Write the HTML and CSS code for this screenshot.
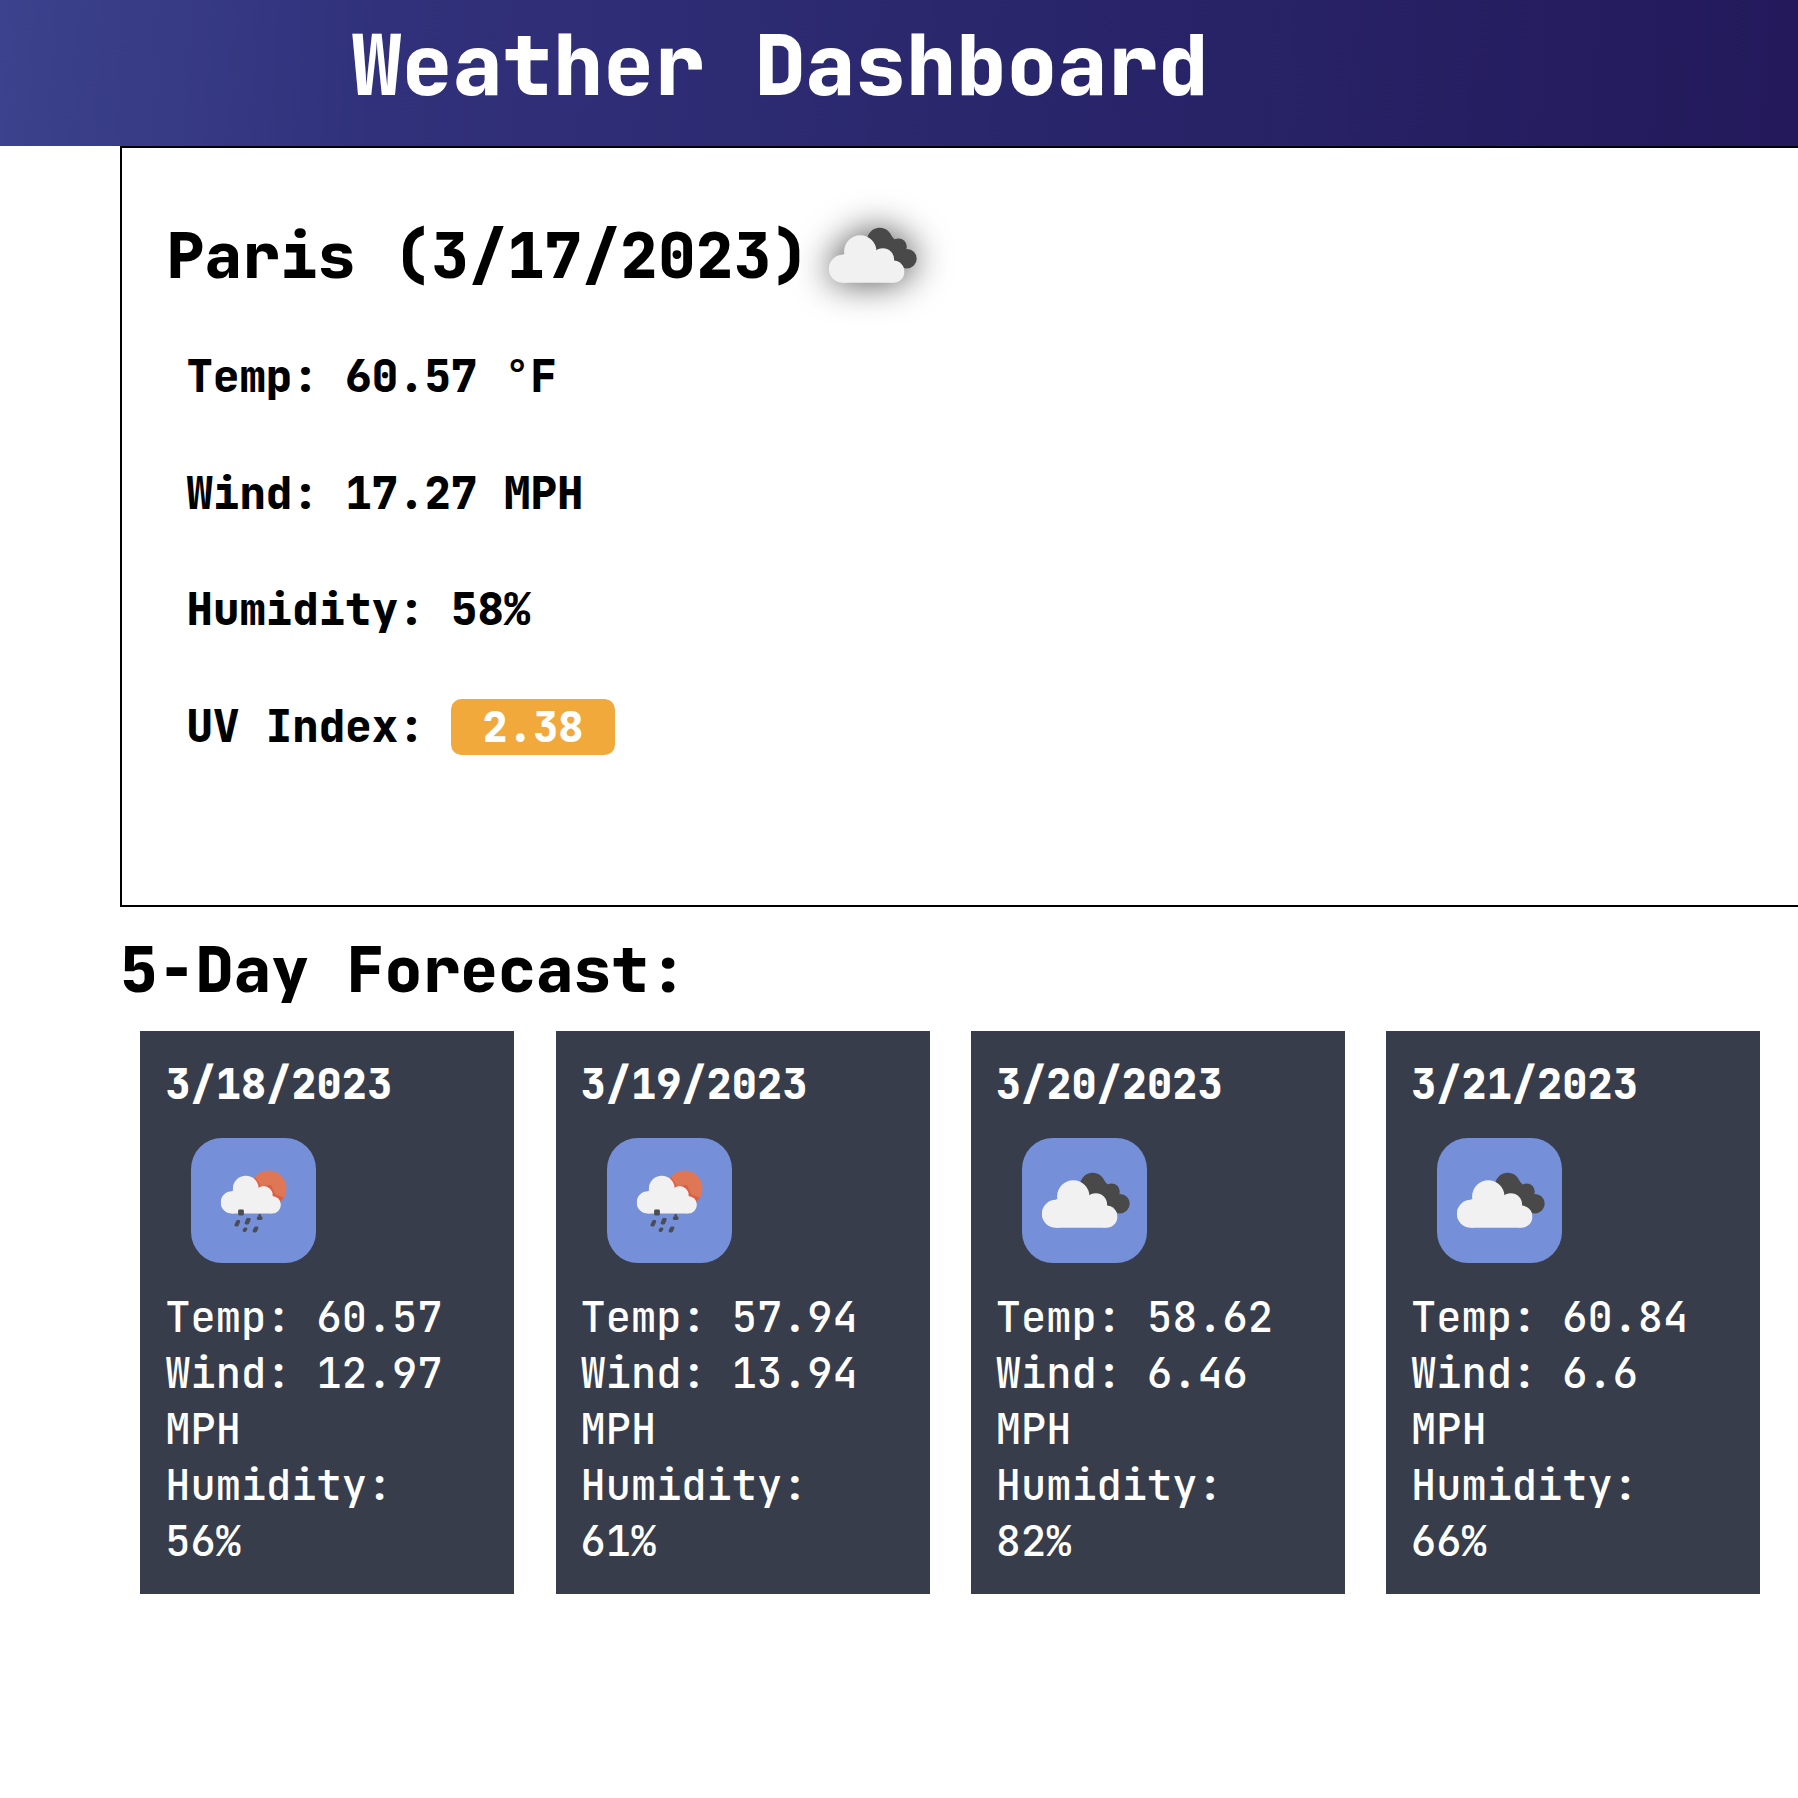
FILE: index.html
```html
<!DOCTYPE html>
<html lang="en">
<head>
<meta charset="utf-8">
<title>Weather Dashboard</title>
<link rel="stylesheet" href="styles.css">
</head>
<body>
<svg class="sprite" aria-hidden="true">
  <symbol id="cloud" viewBox="0 0 76 50">
    <g fill="#f1f1f1">
      <circle cx="14" cy="34.300" r="14"/>
      <circle cx="31.500" cy="17" r="16.200"/>
      <circle cx="54" cy="25" r="11.300"/>
      <circle cx="64.500" cy="37.200" r="11.100"/>
      <path d="M14 20L31 15L54 20L64 30V48.300H14Z"/>
    </g>
  </symbol>
  <symbol id="broken-clouds" viewBox="0 0 125 125">
    <g fill="#49494a">
      <circle cx="70.700" cy="47.300" r="12.600"/>
      <circle cx="89.500" cy="53.700" r="8.300"/>
      <circle cx="98" cy="65.700" r="9.700"/>
      <path d="M60 52L76 36L98 60L92 74L84 66Z"/>
    </g>
    <use href="#cloud" x="19.800" y="41.500" width="76" height="50"/>
  </symbol>
  <symbol id="rain" viewBox="0 0 125 125">
    <circle cx="77.500" cy="50.500" r="18" fill="#df7757"/>
    <path d="M64 39L70 48L80 47L84 56L93 60L88 65L60 60Z" fill="#dd5d40"/>
    <use href="#cloud" x="29.700" y="37.100" width="60.500" height="39.800"/>
    <g class="drops">
      <path d="M48.500 73h3v3h-3zM46.500 83.500h1.300l-1.500 3.500h-1.500zM56.500 81.500h1.800l-1.500 3.500h-1.800zM68.700 77.500v2.500h1.500v.5h-3v-.5h1.500zM53.800 91h1.200l-1 1.500h-1zM64.500 90h1.500l-1.500 3h-1.500z"/>
    </g>
  </symbol>
</svg>
<header class="header"><h1 class="title">Weather Dashboard</h1></header>
<main class="main">
  <section class="current">
    <h2 class="city"><span>Paris (3/17/2023)</span><svg class="city-icon"><use href="#broken-clouds"/></svg></h2>
    <p class="stat">Temp: 60.57 °F</p>
    <p class="stat">Wind: 17.27 MPH</p>
    <p class="stat">Humidity: 58%</p>
    <p class="stat">UV Index: <span class="badge">2.38</span></p>
  </section>
  <h2 class="forecast-title">5-Day Forecast:</h2>
  <section class="cards">
    <article class="card">
      <h3 class="date">3/18/2023</h3>
      <svg class="tile"><use href="#rain"/></svg>
      <p class="line">Temp: 60.57</p><p class="line">Wind: 12.97 MPH</p><p class="line">Humidity: 56%</p>
    </article>
    <article class="card">
      <h3 class="date">3/19/2023</h3>
      <svg class="tile"><use href="#rain"/></svg>
      <p class="line">Temp: 57.94</p><p class="line">Wind: 13.94 MPH</p><p class="line">Humidity: 61%</p>
    </article>
    <article class="card">
      <h3 class="date">3/20/2023</h3>
      <svg class="tile"><use href="#broken-clouds"/></svg>
      <p class="line">Temp: 58.62</p><p class="line">Wind: 6.46 MPH</p><p class="line">Humidity: 82%</p>
    </article>
    <article class="card">
      <h3 class="date">3/21/2023</h3>
      <svg class="tile"><use href="#broken-clouds"/></svg>
      <p class="line">Temp: 60.84</p><p class="line">Wind: 6.6 MPH</p><p class="line">Humidity: 66%</p>
    </article>
  </section>
</main>
</body>
</html>
```
FILE: styles.css
```css
* { box-sizing: border-box; margin: 0; padding: 0; }
body {
  height: 1798px;
  overflow: hidden;
  background: #fff;
  color: #000;
  font-family: "JetBrains Mono", "DejaVu Sans Mono", "Liberation Mono", monospace;
  font-size: 42px;
  font-weight: 500;
  line-height: 56px;
}
.sprite { display: none; }
.title, .city, .forecast-title, .stat, .date { font-weight: 800; }
.header {
  height: 146px;
  padding: 9px 0 0 351.500px;
  background: linear-gradient(93deg, #3c428d 0%, #31317b 21%, #2b286e 50%, #23195b 100%);
}
.title { color: #fff; font-size: 84px; line-height: 112px; white-space: nowrap; }
.main { padding-left: 120px; }
.current {
  height: 761px;
  border: 2px solid #000;
  border-right: 0;
  padding: 45px 0 0 44.500px;
}
.city {
  display: flex;
  align-items: center;
  height: 125px;
  font-size: 63px;
}
.city-icon {
  width: 125px;
  height: 125px;
  filter: drop-shadow(0 0 18px rgba(0, 0, 0, .7));
}
.stat {
  margin-left: 20px;
  height: 116.700px;
  font-size: 44.100px;
  line-height: 116.700px;
}
.badge {
  display: inline-block;
  height: 56px;
  padding: 0 31.500px;
  border-radius: 10.500px;
  background: #f2a93c;
  color: #fff;
  font-size: 42px;
  line-height: 56px;
}
.forecast-title { margin-top: 21px; height: 103px; font-size: 63px; line-height: 84px; }
.cards { display: flex; gap: 41.250px; padding-left: 20.300px; }
.card {
  flex: none;
  width: 374px;
  height: 563px;
  padding: 25px;
  background: #373d4b;
  color: #fff;
}
.date { font-size: 42px; line-height: 56px; }
.tile {
  display: block;
  width: 125px;
  height: 125px;
  margin: 26px 0 26px 26px;
  border-radius: 31px;
  background: #7590d8;
}
.drops {
  fill: #4b4d55;
  stroke: #4b4d55;
  stroke-width: 2.800px;
  stroke-linejoin: round;
}
```
